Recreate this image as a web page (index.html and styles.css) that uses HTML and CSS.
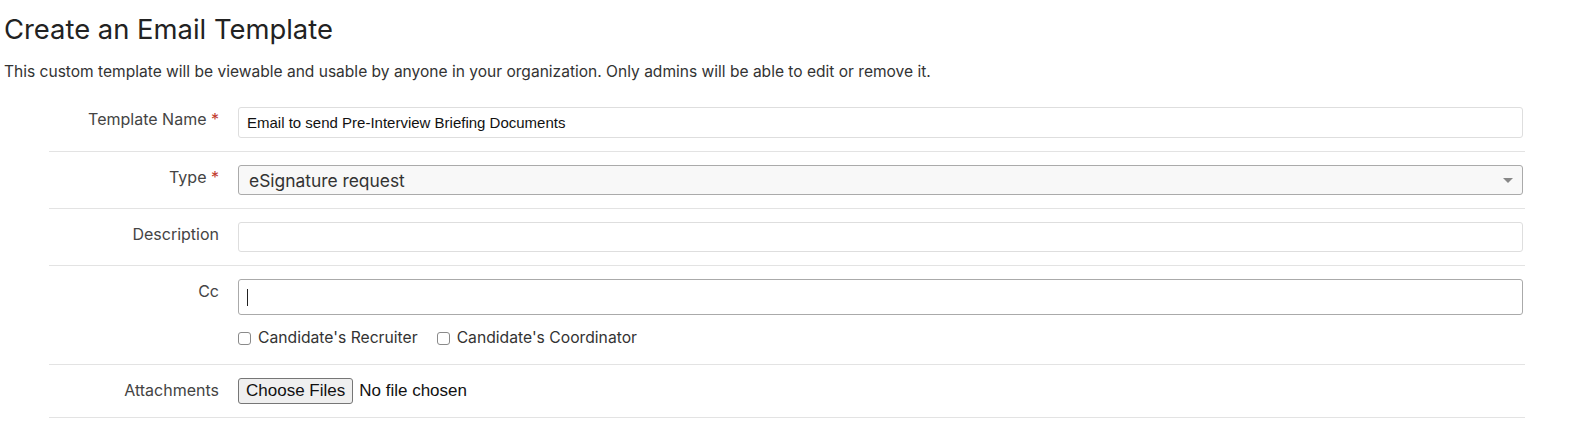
FILE: index.html
```html
<!DOCTYPE html>
<html>
<head>
<meta charset="utf-8">
<title>Create an Email Template</title>
<link rel="stylesheet" href="styles.css">
</head>
<body>
<div class="page">
  <h1 class="title">Create an Email Template</h1>
  <p class="intro">This custom template will be viewable and usable by anyone in your organization. Only admins will be able to edit or remove it.</p>
  <form class="form">
    <div class="row">
      <label class="label">Template Name <span class="req">*</span></label>
      <div class="field">
        <input class="text-input" type="text" value="Email to send Pre-Interview Briefing Documents">
      </div>
    </div>
    <div class="row">
      <label class="label">Type <span class="req">*</span></label>
      <div class="field">
        <div class="select">
          <span class="select-value">eSignature request</span>
          <span class="select-arrow"></span>
        </div>
      </div>
    </div>
    <div class="row">
      <label class="label">Description</label>
      <div class="field">
        <input class="text-input short" type="text" value="">
      </div>
    </div>
    <div class="row">
      <label class="label">Cc</label>
      <div class="field">
        <div class="cc-input"><span class="caret"></span></div>
        <div class="checks">
          <label class="check"><input type="checkbox"> Candidate's Recruiter</label>
          <label class="check"><input type="checkbox"> Candidate's Coordinator</label>
        </div>
      </div>
    </div>
    <div class="row">
      <label class="label">Attachments</label>
      <div class="field">
        <input class="file" type="file" multiple>
      </div>
    </div>
  </form>
</div>
</body>
</html>
```

FILE: styles.css
```css
html, body {
  margin: 0;
  padding: 0;
  background: #ffffff;
}

.page {
  padding: 0 0 0 4px;
  font-family: "Inter", "Liberation Sans", sans-serif;
  color: #222222;
}

.title {
  margin: 14px 0 0 0;
  font-size: 27.4px;
  line-height: 31px;
  font-weight: 400;
  color: #222222;
}

.intro {
  margin: 17px 0 0 0;
  font-size: 15.55px;
  line-height: 20px;
  color: #333333;
}

.form {
  margin: 12px 0 0 45px;
  width: 1476px;
}

.row {
  display: grid;
  grid-template-columns: 170px 1285px;
  column-gap: 19px;
  padding: 13px 0;
  border-bottom: 1px solid #e3e3e3;
}

.label {
  padding-top: 2px;
  font-size: 16px;
  line-height: 20px;
  color: #444444;
  text-align: right;
}

.req {
  color: #c0392b;
}

.field {
  display: flex;
  flex-direction: column;
}

.text-input {
  box-sizing: border-box;
  height: 31px;
  margin: 0;
  padding: 0 8px;
  border: 1px solid #dedede;
  border-radius: 3px;
  background: #ffffff;
  font-family: "Liberation Sans", Arial, sans-serif;
  font-size: 15px;
  color: #111111;
  outline: none;
}

.text-input.short {
  height: 30px;
}

.select {
  box-sizing: border-box;
  height: 30px;
  display: flex;
  align-items: center;
  justify-content: space-between;
  padding: 0 9px 0 10px;
  border: 1px solid #aaaaaa;
  border-radius: 3px;
  background: #f8f8f8;
}

.select-value {
  font-size: 17.4px;
  color: #333333;
}

.select-arrow {
  width: 0;
  height: 0;
  border-left: 5px solid transparent;
  border-right: 5px solid transparent;
  border-top: 5px solid #888888;
}

.cc-input {
  box-sizing: border-box;
  height: 36px;
  display: flex;
  align-items: center;
  padding-left: 8px;
  border: 1px solid #aaaaaa;
  border-radius: 3px;
  background: #ffffff;
}

.caret {
  width: 1px;
  height: 17px;
  background: #222222;
}

.checks {
  display: flex;
  gap: 19px;
  padding: 13px 0 3px 0;
  line-height: 20px;
}

.check {
  display: flex;
  align-items: center;
  gap: 7px;
  font-size: 15.7px;
  color: #333333;
}

.check input {
  appearance: none;
  -webkit-appearance: none;
  box-sizing: border-box;
  margin: 0;
  width: 13px;
  height: 13px;
  border: 1px solid #8a8a8a;
  border-radius: 3px;
  background: #ffffff;
}

.file {
  font-family: "Liberation Sans", Arial, sans-serif;
  font-size: 17px;
  color: #111111;
  height: 26px;
}

.file::file-selector-button {
  font-family: "Liberation Sans", Arial, sans-serif;
  font-size: 17px;
  height: 26px;
  padding: 0 7px;
  margin-right: 6px;
  border: 1px solid #767676;
  border-radius: 3px;
  background: #efefef;
  color: #111111;
}
```
